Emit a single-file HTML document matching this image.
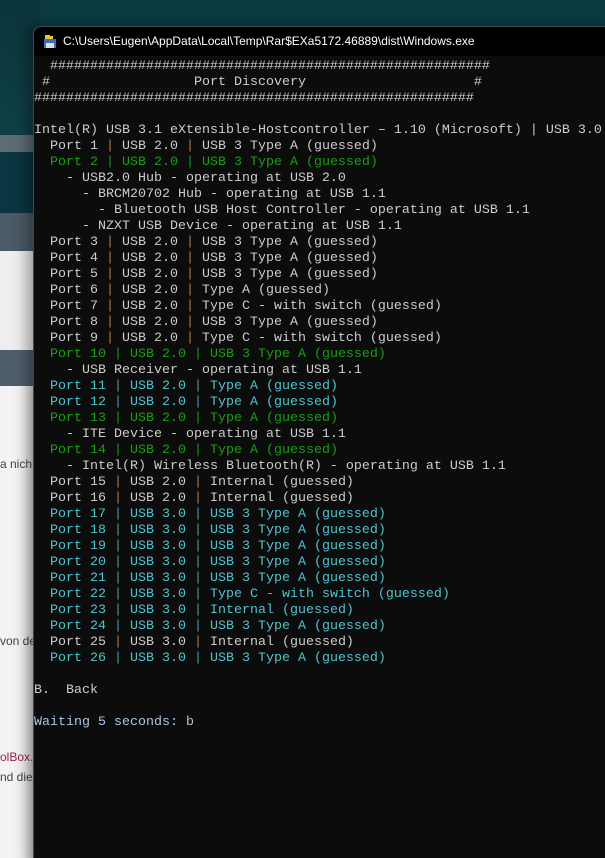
<!DOCTYPE html>
<html><head><meta charset="utf-8"><style>
html,body{margin:0;padding:0;width:605px;height:858px;overflow:hidden;background:#0c3a42;position:relative;font-family:"Liberation Sans",sans-serif}
.bg{position:absolute;left:0;width:40px}
.win{position:absolute;left:33px;top:26px;width:580px;height:840px;background:#0c0c0c;border-top-left-radius:8px;border:1px solid #3a4a50;box-shadow:-6px 0 14px rgba(0,0,0,.35)}
.title{position:absolute;left:0;top:0;right:0;height:29px;background:#000;border-top-left-radius:8px;color:#fff;font-size:12px;line-height:29px}
.title span{position:absolute;left:29px;top:0}
pre{position:absolute;left:0;top:32px;margin:0;font-family:"Liberation Mono",monospace;font-size:13.33px;line-height:16px;color:#cccccc}
.g{color:#13a10e}.c{color:#4cc6d0}.o{color:#b87a3c}.cp{color:#3aa0a8}.gp{color:#13a10e}.b{color:#a9c6e6}
.lt{position:absolute;font-size:12px;color:#444}
</style></head><body>
<div class="bg" style="top:0;height:135px;background:linear-gradient(#0b343b,#0f4048)"></div>
<div class="bg" style="top:135px;height:17px;background:#5d6b74"></div>
<div class="bg" style="top:152px;height:61px;background:#0b3540"></div>
<div class="bg" style="top:213px;height:38px;background:#4b5a66"></div>
<div class="bg" style="top:251px;height:99px;background:#eeeeee"></div>
<div class="bg" style="top:350px;height:36px;background:#4f5d6b"></div>
<div class="bg" style="top:386px;height:472px;background:linear-gradient(90deg,#f3f3f3 60%,#c8c8c8)"></div>
<div class="lt" style="left:0;top:457px">a nich</div>
<div class="lt" style="left:0;top:634px">von de</div>
<div class="lt" style="left:0;top:750px;color:#a0204a">olBox.</div>
<div class="lt" style="left:0;top:770px">nd die</div>
<div class="win">
<div class="title"><svg style="position:absolute;left:9px;top:7px" width="14" height="15" viewBox="0 0 14 15"><rect x="1" y="5" width="12" height="9" fill="#3a6fc0"/><rect x="3" y="9" width="8" height="5" fill="#ddd"/><path d="M2 1h5v4H2z" fill="#f2c230"/><path d="M7 2h3v3H7z" fill="#f2c230"/></svg><span>C:\Users\Eugen\AppData\Local\Temp\Rar$EXa5172.46889\dist\Windows.exe</span></div>
<pre>  #######################################################
 #                  Port Discovery                     #
#######################################################

Intel(R) USB 3.1 eXtensible-Hostcontroller – 1.10 (Microsoft) | USB 3.0
  Port 1 <span class="o">|</span> USB 2.0 <span class="o">|</span> USB 3 Type A (guessed)
<span class="g">  Port 2 <span class="gp">|</span> USB 2.0 <span class="gp">|</span> USB 3 Type A (guessed)</span>
    - USB2.0 Hub - operating at USB 2.0
      - BRCM20702 Hub - operating at USB 1.1
        - Bluetooth USB Host Controller - operating at USB 1.1
      - NZXT USB Device - operating at USB 1.1
  Port 3 <span class="o">|</span> USB 2.0 <span class="o">|</span> USB 3 Type A (guessed)
  Port 4 <span class="o">|</span> USB 2.0 <span class="o">|</span> USB 3 Type A (guessed)
  Port 5 <span class="o">|</span> USB 2.0 <span class="o">|</span> USB 3 Type A (guessed)
  Port 6 <span class="o">|</span> USB 2.0 <span class="o">|</span> Type A (guessed)
  Port 7 <span class="o">|</span> USB 2.0 <span class="o">|</span> Type C - with switch (guessed)
  Port 8 <span class="o">|</span> USB 2.0 <span class="o">|</span> USB 3 Type A (guessed)
  Port 9 <span class="o">|</span> USB 2.0 <span class="o">|</span> Type C - with switch (guessed)
<span class="g">  Port 10 <span class="gp">|</span> USB 2.0 <span class="gp">|</span> USB 3 Type A (guessed)</span>
    - USB Receiver - operating at USB 1.1
<span class="c">  Port 11 <span class="cp">|</span> USB 2.0 <span class="cp">|</span> Type A (guessed)</span>
<span class="c">  Port 12 <span class="cp">|</span> USB 2.0 <span class="cp">|</span> Type A (guessed)</span>
<span class="g">  Port 13 <span class="gp">|</span> USB 2.0 <span class="gp">|</span> Type A (guessed)</span>
    - ITE Device - operating at USB 1.1
<span class="g">  Port 14 <span class="gp">|</span> USB 2.0 <span class="gp">|</span> Type A (guessed)</span>
    - Intel(R) Wireless Bluetooth(R) - operating at USB 1.1
  Port 15 <span class="o">|</span> USB 2.0 <span class="o">|</span> Internal (guessed)
  Port 16 <span class="o">|</span> USB 2.0 <span class="o">|</span> Internal (guessed)
<span class="c">  Port 17 <span class="cp">|</span> USB 3.0 <span class="cp">|</span> USB 3 Type A (guessed)</span>
<span class="c">  Port 18 <span class="cp">|</span> USB 3.0 <span class="cp">|</span> USB 3 Type A (guessed)</span>
<span class="c">  Port 19 <span class="cp">|</span> USB 3.0 <span class="cp">|</span> USB 3 Type A (guessed)</span>
<span class="c">  Port 20 <span class="cp">|</span> USB 3.0 <span class="cp">|</span> USB 3 Type A (guessed)</span>
<span class="c">  Port 21 <span class="cp">|</span> USB 3.0 <span class="cp">|</span> USB 3 Type A (guessed)</span>
<span class="c">  Port 22 <span class="cp">|</span> USB 3.0 <span class="cp">|</span> Type C - with switch (guessed)</span>
<span class="c">  Port 23 <span class="cp">|</span> USB 3.0 <span class="cp">|</span> Internal (guessed)</span>
<span class="c">  Port 24 <span class="cp">|</span> USB 3.0 <span class="cp">|</span> USB 3 Type A (guessed)</span>
  Port 25 <span class="o">|</span> USB 3.0 <span class="o">|</span> Internal (guessed)
<span class="c">  Port 26 <span class="cp">|</span> USB 3.0 <span class="cp">|</span> USB 3 Type A (guessed)</span>

B.  Back

<span class="b">Waiting 5 seconds: b</span>
</pre>
</div>
</body></html>
